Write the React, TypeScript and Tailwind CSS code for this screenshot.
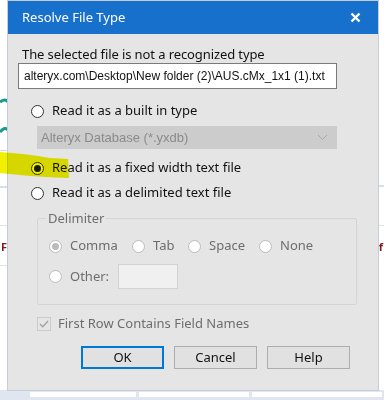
import React from "react";

const FONT = { fontFamily: '"Noto Sans", "Open Sans", sans-serif' };
const SANS = { fontFamily: '"Liberation Sans", Arial, sans-serif' };

function Radio({ checked, disabled }: { checked?: boolean; disabled?: boolean }) {
  return (
    <span
      className={
        "flex h-[13px] w-[13px] shrink-0 items-center justify-center rounded-full border bg-white " +
        (disabled ? "border-[#bcbcbc]" : "border-[#333333]")
      }
    >
      {checked && (
        <span
          className={
            "h-[7px] w-[7px] rounded-full " + (disabled ? "bg-[#bcbcbc]" : "bg-[#1b1b1b]")
          }
        />
      )}
    </span>
  );
}

function Option({ label, checked }: { label: string; checked?: boolean }) {
  return (
    <div className="flex h-[20px] items-center gap-[8px] pl-[13px] text-[13px] text-[#111]">
      <Radio checked={checked} />
      <span>{label}</span>
    </div>
  );
}

function DelimRadio({ label, checked, w }: { label: string; checked?: boolean; w: string }) {
  return (
    <div className={"flex items-center gap-[8px] text-[13px] text-[#6d6d6d] " + w}>
      <Radio checked={checked} disabled />
      <span>{label}</span>
    </div>
  );
}

function Btn({ label, primary }: { label: string; primary?: boolean }) {
  return (
    <div
      className={
        "flex h-[23px] w-[83px] items-center justify-center bg-[#e1e1e1] text-[13px] text-[#111] " +
        (primary ? "border-2 border-[#0078d7]" : "border border-[#adadad]")
      }
    >
      {label}
    </div>
  );
}

export default function App() {
  return (
    <div className="relative h-[400px] w-[384px] overflow-hidden bg-white" style={FONT}>
      {/* background app bits peeking out */}
      <div className="absolute left-0 top-[150px] h-px w-[8px] bg-[#cfd9e6]" />
      <div className="absolute left-0 top-[186px] h-[2px] w-[8px] bg-[#d6dfeb]" />
      <div className="absolute left-0 top-[225px] h-px w-[8px] bg-[#dde4ee]" />
      <div className="absolute left-0 top-[265px] h-px w-[8px] bg-[#dde4ee]" />
      <div className="absolute left-[1px] top-[241px] text-[11px] font-bold leading-none text-[#7a1c1c]">F</div>
      <div className="absolute right-0 top-[185px] h-[2px] w-[5px] bg-[#d6dfeb]" />
      <div className="absolute right-0 top-[225px] h-px w-[5px] bg-[#dde4ee]" />
      <div className="absolute right-[1px] top-[241px] text-[11px] font-bold leading-none text-[#7a1c1c]">f</div>
      <svg className="absolute left-0 top-[96px]" width="8" height="46">
        <path d="M0 6 Q5 2 8 6" stroke="#1a9a8a" strokeWidth="3" fill="none" />
        <path d="M0 36 Q5 30 8 34" stroke="#1a9a8a" strokeWidth="3" fill="none" />
      </svg>
      <div className="absolute bottom-0 left-0 flex h-[10px] w-[384px] gap-[3px] bg-[#dfe6f0] pl-[30px] pt-[2px]">
        <div className="h-[5px] w-[106px] bg-white" />
        <div className="h-[5px] w-[110px] bg-white" />
        <div className="h-[5px] w-[130px] bg-white" />
      </div>

      {/* dialog */}
      <div className="relative ml-[7px] flex h-[391px] w-[372px] flex-col border border-[#c5cdd8] bg-[#e5e5e5]">
        <div className="flex h-[33px] shrink-0 items-center justify-between bg-[#1770cb] pl-[14px] pr-[17px] text-[13px] text-white">
          <span>Resolve File Type</span>
          <svg width="11" height="11" viewBox="0 0 11 11">
            <path d="M1.5 1.5 L9.5 9.5 M9.5 1.5 L1.5 9.5" stroke="white" strokeWidth="2.4" />
          </svg>
        </div>

        <div className="flex flex-col pl-[10px]">
          <div className="mt-[10px] h-[20px] pl-[4px] text-[13px] leading-[20px] tracking-[-0.1px] text-[#111]">
            The selected file is not a recognized type
          </div>
          <div
            className="mt-[-1px] flex h-[26px] w-[319px] items-center overflow-hidden whitespace-nowrap border border-[#7a7a7a] bg-white pl-[5px] text-[12px] text-[#111]"
            style={SANS}
          >
            alteryx.com\Desktop\New folder (2)\AUS.cMx_1x1 (1).txt
          </div>

          <div className="mt-[12px]">
            <Option label="Read it as a built in type" />
          </div>
          <div
            className="ml-[19px] mt-[5px] flex h-[23px] w-[300px] items-center justify-between border border-[#cccccc] bg-[#cccccc] pl-[3px] pr-[8px] text-[13px] text-[#8a8a8a]"
            style={SANS}
          >
            <span>Alteryx Database (*.yxdb)</span>
            <svg width="11" height="7" viewBox="0 0 11 7">
              <path d="M1 1 L5.5 5.5 L10 1" stroke="#a8a8a8" strokeWidth="1" fill="none" />
            </svg>
          </div>
          <div className="mt-[9px]">
            <Option label="Read it as a fixed width text file" checked />
          </div>
          <div className="mt-[5px]">
            <Option label="Read it as a delimited text file" />
          </div>

          {/* delimiter group */}
          <div className="relative ml-[19px] mt-[15px] h-[87px] w-[320px] rounded-[2px] border border-[#d5d5d5]">
            <span className="absolute left-[8px] top-[-11px] bg-[#e5e5e5] px-[2px] text-[13px] leading-[20px] text-[#6d6d6d]">
              Delimiter
            </span>
            <div className="flex flex-col pl-[11px] pt-[17px]">
              <div className="flex h-[20px] items-center">
                <DelimRadio label="Comma" checked w="w-[83px]" />
                <DelimRadio label="Tab" w="w-[56px]" />
                <DelimRadio label="Space" w="w-[71px]" />
                <DelimRadio label="None" w="w-[70px]" />
              </div>
              <div className="mt-[8px] flex h-[25px] items-center">
                <DelimRadio label="Other:" w="w-[69px]" />
                <div className="h-[25px] w-[60px] border border-[#d2d2d2] bg-[#f0f0f0]" />
              </div>
            </div>
          </div>

          <div className="ml-[19px] mt-[12px] flex h-[14px] items-center gap-[7px] text-[13px] text-[#6d6d6d]">
            <span className="flex h-[14px] w-[14px] items-center justify-center border border-[#cccccc] bg-[#e5e5e5]">
              <svg width="10" height="8" viewBox="0 0 10 8">
                <path d="M1 4 L3.8 6.8 L9 1" stroke="#a0a0a0" strokeWidth="1.3" fill="none" />
              </svg>
            </span>
            <span>First Row Contains Field Names</span>
          </div>

          <div className="ml-[63px] mt-[15px] flex gap-[10px]">
            <Btn label="OK" primary />
            <Btn label="Cancel" />
            <Btn label="Help" />
          </div>
        </div>
      </div>

      {/* highlighter mark */}
      <svg className="pointer-events-none absolute left-0 top-[150px] mix-blend-multiply" width="72" height="34">
        <path d="M0 2 Q30 4 50 8 L68 9 L69 28 Q40 27 20 25 L0 23 Z" fill="#f0f000" />
      </svg>
    </div>
  );
}
